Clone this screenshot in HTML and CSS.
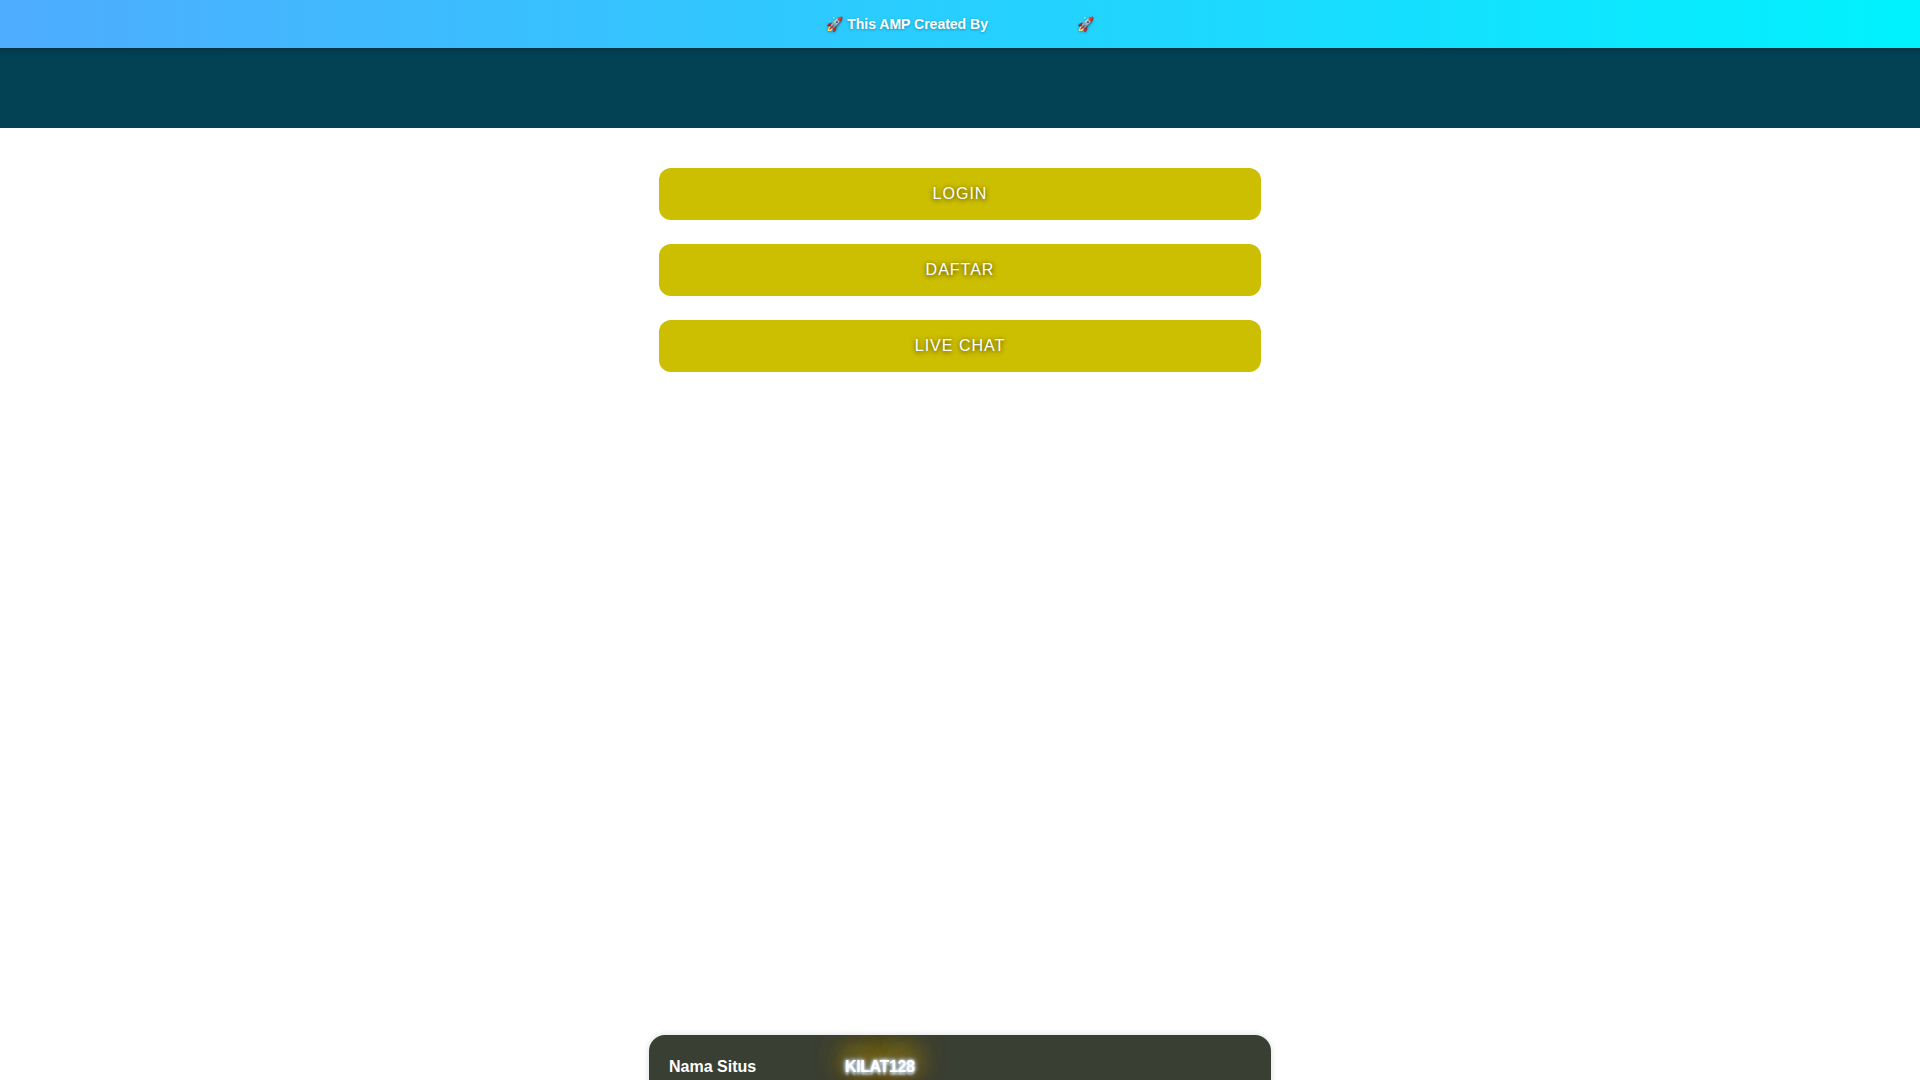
FILE: index.html
```html
<!DOCTYPE html>
<html lang="id">
<head>
<meta charset="utf-8">
<title>KILAT128</title>
<link rel="stylesheet" href="styles.css">
</head>
<body>
<div class="promo"><b class="promo-text">🚀 This AMP Created By <span class="promo-link"></span> 🚀</b></div>
<header class="masthead"></header>
<main class="content">
  <nav class="actions">
    <a class="btn" href="#">LOGIN</a>
    <a class="btn" href="#">DAFTAR</a>
    <a class="btn" href="#">LIVE CHAT</a>
  </nav>
  <div class="media"></div>
  <section class="card">
    <div class="row"><span class="label">Nama Situs</span><span class="value">KILAT128</span></div>
  </section>
</main>
</body>
</html>
```
FILE: styles.css
```css
* { box-sizing: border-box; }
html, body { margin: 0; padding: 0; }
body { background: #fff; font-family: "Liberation Sans", Arial, sans-serif; overflow-x: hidden; }
.promo {
  height: 48px;
  display: flex;
  align-items: center;
  justify-content: center;
  background: linear-gradient(90deg, #4facfe, #00f2fe);
  color: #fff;
  font-size: 14px;
  text-shadow: 0 1px 3px rgba(0, 0, 0, .3);
}
.promo-link { display: inline-block; width: 81px; }
.masthead {
  height: 80px;
  background: #034154;
  box-shadow: inset 0 6px 6px -6px rgba(0, 0, 0, .4);
}
.content { width: 622px; margin: 0 auto; }
.actions { display: flex; flex-direction: column; gap: 24px; padding: 40px 10px 0; }
.btn {
  height: 52px;
  display: flex;
  align-items: center;
  justify-content: center;
  background: #ccbe00;
  border-radius: 12px;
  color: #fff;
  text-decoration: none;
  font-size: 16px;
  letter-spacing: 1px;
  text-shadow: 0 1px 5px rgba(0, 0, 0, .7);
}
.media { height: 663px; }
.card {
  background: #3a3f34;
  border-radius: 16px 16px 0 0;
  box-shadow: 0 0 6px rgba(0, 0, 0, .15);
  padding: 20px;
  height: 120px;
  overflow: hidden;
}
.row { display: flex; align-items: center; color: #fff; font-size: 16px; font-weight: 700; line-height: 24px; }
.label { width: 176px; }
.value {
  color: #fff;
  letter-spacing: -0.4px;
  text-shadow:
    0 0 3px #fff,
    0 0 4px #a9cdff,
    0 0 6px #8fb8ff,
    0 3px 2px rgba(255, 255, 255, .5),
    0 0 24px rgba(255, 140, 0, .8),
    0 -10px 32px rgba(255, 238, 0, .8),
    0 -10px 32px rgba(255, 238, 0, .8),
    0 0 36px rgba(255, 200, 0, .6);
}
```
